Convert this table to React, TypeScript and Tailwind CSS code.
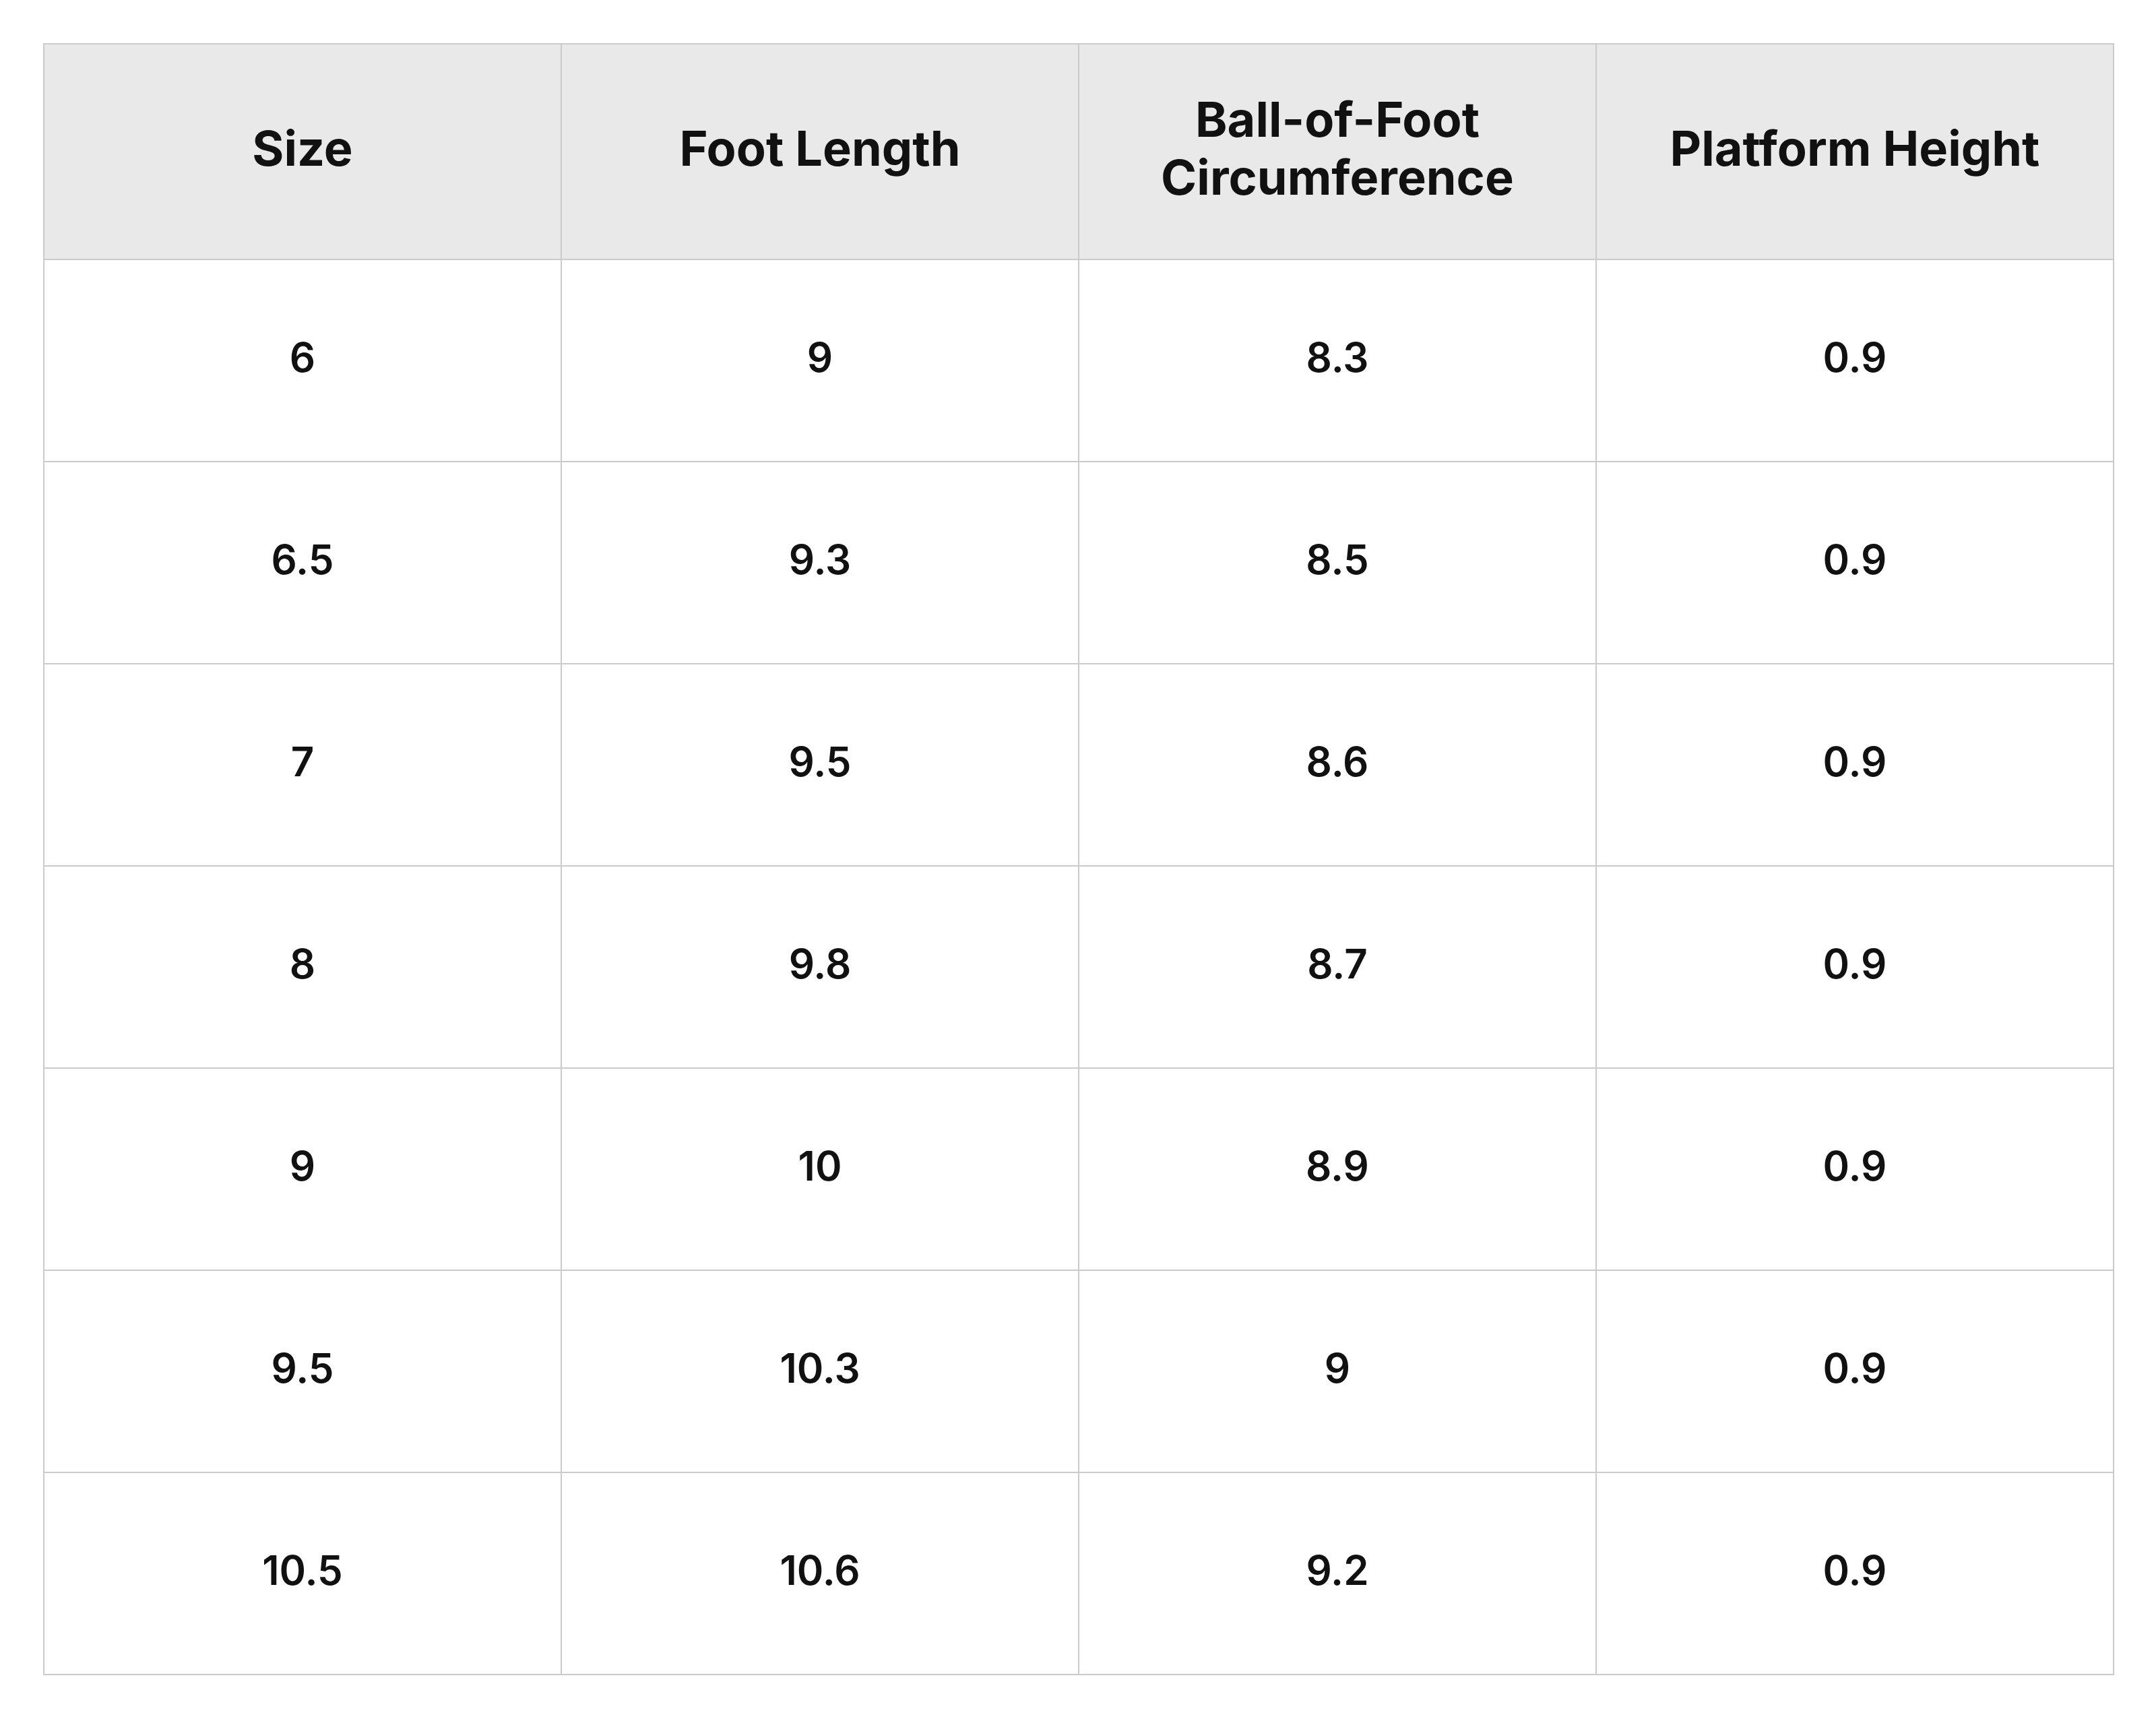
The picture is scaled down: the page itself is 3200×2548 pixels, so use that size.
const headers = ["Size", "Foot Length", "Ball-of-Foot Circumference", "Platform Height"];

const rows = [
  ["6", "9", "8.3", "0.9"],
  ["6.5", "9.3", "8.5", "0.9"],
  ["7", "9.5", "8.6", "0.9"],
  ["8", "9.8", "8.7", "0.9"],
  ["9", "10", "8.9", "0.9"],
  ["9.5", "10.3", "9", "0.9"],
  ["10.5", "10.6", "9.2", "0.9"],
];

export default function App() {
  return (
    <div className="min-h-screen bg-white p-[64px] font-['Inter','Noto_Sans',sans-serif] text-[#111111]">
      <div className="grid w-[3074px] grid-cols-4 border-l-2 border-t-2 border-[#cbcbcb]">
        {headers.map((h) => (
          <div
            key={h}
            className="flex h-[320px] items-center justify-center border-b-2 border-r-2 border-[#cbcbcb] bg-[#e9e9e9] px-[80px] pb-[10px] text-center text-[72px] font-bold leading-[86px]"
          >
            {h}
          </div>
        ))}
        {rows.map((r, i) =>
          r.map((c, j) => (
            <div
              key={`${i}-${j}`}
              className="flex h-[300px] items-center justify-center border-b-2 border-r-2 border-[#cbcbcb] pb-[10px] text-[60px] font-semibold"
            >
              {c}
            </div>
          ))
        )}
      </div>
    </div>
  );
}
